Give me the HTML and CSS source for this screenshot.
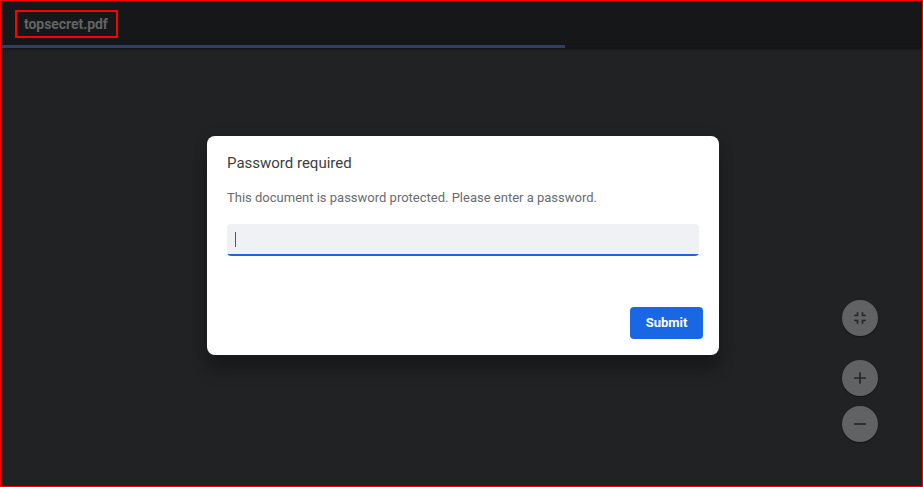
FILE: index.html
```html
<!DOCTYPE html>
<html lang="en">
<head>
    <meta charset="UTF-8">
    <meta name="viewport" content="width=device-width, initial-scale=1.0">
    <title>topsecret.pdf</title>
    <link rel="stylesheet" href="styles.css">
</head>
<body>
    <div class="viewer">
        <header class="toolbar">
            <span class="file-name">topsecret.pdf</span>
        </header>
        <div class="progress"><div class="progress-bar" style="width: 564px"></div></div>

        <div class="zoom-controls">
            <button class="zoom-btn fit" aria-label="Fit to page">
                <svg viewBox="0 0 24 24"><path d="M5 16h3v3h2v-5H5v2zm3-8H5v2h5V5H8v3zm6 11h2v-3h3v-2h-5v5zm2-11V5h-2v5h5V8h-3z"/></svg>
            </button>
            <button class="zoom-btn" aria-label="Zoom in">
                <svg viewBox="0 0 24 24"><path d="M19 13h-6v6h-2v-6H5v-2h6V5h2v6h6v2z"/></svg>
            </button>
            <button class="zoom-btn" aria-label="Zoom out">
                <svg viewBox="0 0 24 24"><path d="M19 13H5v-2h14v2z"/></svg>
            </button>
        </div>

        <div class="dialog">
            <h2>Password required</h2>
            <p>This document is password protected. Please enter a password.</p>
            <div class="password-field"><span class="caret"></span></div>
            <div class="dialog-actions">
                <button class="submit-btn">Submit</button>
            </div>
        </div>
    </div>
</body>
</html>
```
FILE: styles.css
```css
* {
    box-sizing: border-box;
}
body {
    margin: 0;
    font-family: Roboto, sans-serif;
    background-color: #212224;
}
.viewer {
    position: relative;
    height: 487px;
    border: 1px solid #ff0000;
    overflow: hidden;
}
.toolbar {
    display: flex;
    align-items: flex-start;
    height: 44px;
    padding: 9px 14px;
    background-color: #161718;
}
.file-name {
    width: 103px;
    height: 28px;
    padding-left: 7px;
    border: 2px solid #ff0000;
    color: #626364;
    font-size: 14px;
    font-weight: bold;
    line-height: 24px;
    letter-spacing: -0.06px;
    white-space: nowrap;
}
.progress {
    height: 3px;
    background-color: #161718;
    box-shadow: 0 1px 3px rgba(0, 0, 0, 0.5);
}
.progress-bar {
    height: 3px;
    background-color: #2d4063;
}
.dialog {
    position: absolute;
    left: 206px;
    top: 135px;
    width: 512px;
    height: 219px;
    padding: 17px 16px 16px 20px;
    display: flex;
    flex-direction: column;
    border-radius: 8px;
    background-color: #ffffff;
    box-shadow: 0 0 16px rgba(0, 0, 0, 0.12), 0 16px 16px rgba(0, 0, 0, 0.24);
}
.dialog h2 {
    margin: 0;
    color: #3c3d40;
    font-size: 15px;
    font-weight: normal;
    line-height: 20px;
}
.dialog p {
    margin: 15px 0 16px;
    color: #6a6c70;
    font-size: 13px;
    line-height: 20px;
}
.password-field {
    width: 472px;
    height: 32px;
    padding: 8px;
    border-radius: 4px;
    overflow: hidden;
    background: linear-gradient(#1a66e0, #1a66e0) bottom / 100% 2px no-repeat #f0f1f4;
}
.caret {
    display: block;
    width: 1px;
    height: 15px;
    background-color: #1a5fc8;
}
.dialog-actions {
    display: flex;
    justify-content: flex-end;
    margin-top: auto;
}
.submit-btn {
    width: 73px;
    height: 32px;
    padding: 0 0 2px;
    border: none;
    border-radius: 4px;
    background-color: #1967e2;
    color: #ffffff;
    font-family: inherit;
    font-size: 13px;
    font-weight: bold;
    cursor: pointer;
}
.zoom-controls {
    position: absolute;
    right: 44px;
    top: 299px;
    display: flex;
    flex-direction: column;
    gap: 10px;
}
.zoom-btn {
    display: flex;
    align-items: center;
    justify-content: center;
    width: 36px;
    height: 36px;
    padding: 0;
    border: none;
    border-radius: 50%;
    background-color: #616264;
    box-shadow: 0 1px 2px rgba(0, 0, 0, 0.4);
    cursor: pointer;
}
.zoom-btn.fit {
    margin-bottom: 14px;
}
.zoom-btn svg {
    width: 20px;
    height: 20px;
    fill: #252628;
}
```
